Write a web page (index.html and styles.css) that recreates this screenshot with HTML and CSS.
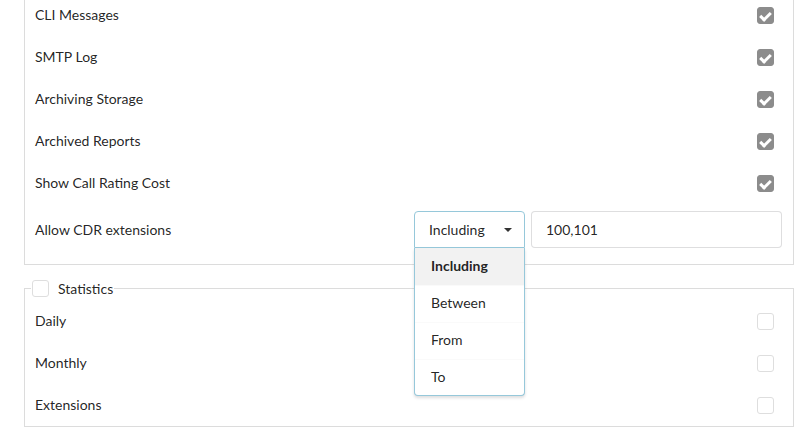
FILE: index.html
```html
<!DOCTYPE html>
<html lang="en">
<head>
    <meta charset="UTF-8">
    <meta name="viewport" content="width=device-width, initial-scale=1.0">
    <title>CDR Settings</title>
    <link rel="stylesheet" href="styles.css">
</head>
<body>
    <div class="page">
        <fieldset class="group">
            <div class="row"><span class="label">CLI Messages</span><span class="check on"></span></div>
            <div class="row"><span class="label">SMTP Log</span><span class="check on"></span></div>
            <div class="row"><span class="label">Archiving Storage</span><span class="check on"></span></div>
            <div class="row"><span class="label">Archived Reports</span><span class="check on"></span></div>
            <div class="row"><span class="label">Show Call Rating Cost</span><span class="check on"></span></div>
            <div class="row row-cdr">
                <span class="label">Allow CDR extensions</span>
                <div class="cdr-controls">
                    <div class="dropdown open">
                        <div class="dropdown-text">Including</div>
                        <span class="caret"></span>
                        <ul class="dropdown-menu">
                            <li class="item selected">Including</li>
                            <li class="item">Between</li>
                            <li class="item">From</li>
                            <li class="item">To</li>
                        </ul>
                    </div>
                    <input type="text" class="input" value="100,101">
                </div>
            </div>
        </fieldset>

        <fieldset class="group group-stats">
            <legend class="legend"><span class="check"></span>Statistics</legend>
            <div class="row"><span class="label">Daily</span><span class="check"></span></div>
            <div class="row"><span class="label">Monthly</span><span class="check"></span></div>
            <div class="row"><span class="label">Extensions</span><span class="check"></span></div>
        </fieldset>
    </div>
</body>
</html>
```

FILE: styles.css
```css
:root {
    --text: rgba(0, 0, 0, 0.87);
    --border: #dcdcdc;
    --active: #96c8da;
    --check-on: #8c8c8c;
}

* {
    margin: 0;
    padding: 0;
    box-sizing: border-box;
}

body {
    font-family: Lato, "Open Sans", sans-serif;
    font-size: 14px;
    color: var(--text);
    background: #fff;
    overflow: hidden;
}

.page {
    margin-top: -7px;
    padding: 0 9px 0 24px;
}

.group {
    border: 1px solid var(--border);
    padding: 0 10px;
    min-width: 0;
}

.group-stats {
    margin-top: 15px;
    padding-top: 3px;
}

.row {
    display: flex;
    align-items: center;
    justify-content: space-between;
    height: 42px;
}

.label {
    line-height: 1;
}

/* checkboxes */
.check {
    display: inline-block;
    width: 17px;
    height: 17px;
    border: 1px solid #dedede;
    border-radius: 3px;
    background: #fff;
    margin-right: 9px;
    position: relative;
}

.check.on {
    background: var(--check-on);
    border-color: var(--check-on);
}

.check.on::after {
    content: '';
    position: absolute;
    left: 4px;
    top: 2px;
    width: 4px;
    height: 8px;
    border: solid #fff;
    border-width: 0 3px 3px 0;
    transform: rotate(45deg);
}

.legend {
    display: flex;
    align-items: center;
    gap: 9px;
    margin-left: -4px;
    padding: 0 1px;
    line-height: 17px;
}

.legend .check {
    margin-right: 0;
}

/* extensions filter */
.row-cdr {
    height: auto;
    padding: 7px 0 16px;
}

.cdr-controls {
    display: flex;
    gap: 6px;
    width: 368px;
    margin-right: 1px;
}

.dropdown {
    position: relative;
    width: 111px;
    height: 37px;
    border: 1px solid var(--border);
    border-radius: 4px;
    padding: 0 14px;
    display: flex;
    align-items: center;
}

.dropdown.open {
    border-color: var(--active);
    border-radius: 4px 4px 0 0;
}

.dropdown-text {
    line-height: 1;
    flex: 1;
}

.caret {
    width: 0;
    height: 0;
    border-left: 4px solid transparent;
    border-right: 4px solid transparent;
    border-top: 4px solid #333;
    margin-right: -2px;
}

.dropdown-menu {
    list-style: none;
    position: absolute;
    left: -1px;
    right: -1px;
    top: 36px;
    background: #fff;
    border: 1px solid var(--active);
    border-top: none;
    border-radius: 0 0 4px 4px;
    box-shadow: 0 2px 3px 0 rgba(34, 36, 38, 0.15);
    z-index: 10;
}

.item {
    padding: 10px 16px 0;
    line-height: 1;
    height: 37px;
    border-top: 1px solid #fafafa;
}

.item:first-child {
    border-top: none;
    padding-top: 11px;
}

.item:last-child {
    height: 36px;
}

.item.selected {
    background: rgba(0, 0, 0, 0.05);
    font-weight: 700;
}

.input {
    flex: 1;
    height: 37px;
    border: 1px solid rgba(34, 36, 38, 0.15);
    border-radius: 4px;
    padding: 0 14px;
    font: inherit;
    color: var(--text);
    outline: none;
}
```
